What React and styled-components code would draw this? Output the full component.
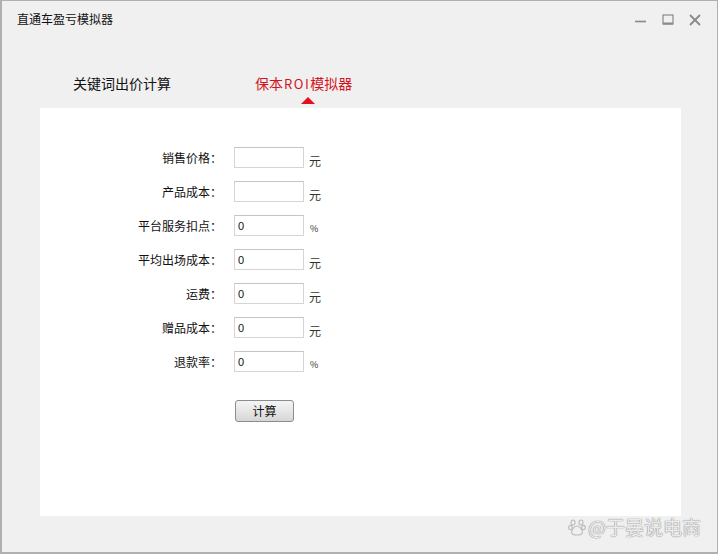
import styled, { createGlobalStyle } from 'styled-components';

const GlobalStyle = createGlobalStyle`
  html, body {
    margin: 0;
    padding: 0;
    background: #f0f0f0;
  }
  body {
    font-family: "Noto Sans CJK SC", "Liberation Sans", sans-serif;
  }
`;

const fields = [
  { label: '销售价格：', value: '', unit: '元' },
  { label: '产品成本：', value: '', unit: '元' },
  { label: '平台服务扣点：', value: '0', unit: '%' },
  { label: '平均出场成本：', value: '0', unit: '元' },
  { label: '运费：', value: '0', unit: '元' },
  { label: '赠品成本：', value: '0', unit: '元' },
  { label: '退款率：', value: '0', unit: '%' },
];

const App = () => {
  return (
    <Window>
      <GlobalStyle />
      <TitleBar>
        <Title>直通车盈亏模拟器</Title>
        <Controls>
          <svg width='14' height='14' viewBox='0 0 14 14'>
            <path d='M1 8.5h11' stroke='#8a8a8a' strokeWidth='1.6' />
          </svg>
          <svg width='14' height='14' viewBox='0 0 14 14'>
            <rect x='2' y='2' width='10' height='9' fill='none' stroke='#8a8a8a' strokeWidth='1.2' />
            <path d='M2 10.5h10' stroke='#8a8a8a' strokeWidth='2' />
          </svg>
          <svg width='14' height='14' viewBox='0 0 14 14'>
            <path d='M2 2l10 10M12 2L2 12' stroke='#8a8a8a' strokeWidth='1.8' />
          </svg>
        </Controls>
      </TitleBar>
      <Tabs>
        <Tab>关键词出价计算</Tab>
        <Tab active>
          保本<Latin>ROI</Latin>模拟器
        </Tab>
      </Tabs>
      <Panel>
        <Form>
          {fields.map((f) => (
            <Row key={f.label}>
              <Label>{f.label}</Label>
              <Input defaultValue={f.value} />
              <Unit small={f.unit === '%'}>{f.unit}</Unit>
            </Row>
          ))}
          <ButtonRow>
            <CalcButton>计算</CalcButton>
          </ButtonRow>
        </Form>
      </Panel>
      <Watermark>
        <svg width='18' height='18' viewBox='0 0 18 18'>
          <g fill='none' stroke='#bdbdbd' strokeWidth='1.2'>
            <ellipse cx='5' cy='4.5' rx='2' ry='2.5' />
            <ellipse cx='13' cy='4.5' rx='2' ry='2.5' />
            <ellipse cx='2.5' cy='9.5' rx='1.8' ry='2.2' />
            <ellipse cx='15.5' cy='9.5' rx='1.8' ry='2.2' />
            <path d='M9 8c-3 0-5.5 4-5.5 6.5 0 2 2 2.5 5.5 2.5s5.5-.5 5.5-2.5C14.5 12 12 8 9 8z' />
          </g>
        </svg>
        <span>@于晏说电商</span>
      </Watermark>
    </Window>
  );
};

export default App;

const Window = styled.div`
  position: relative;
  box-sizing: border-box;
  width: 718px;
  height: 554px;
  background: #f0f0f0;
  border: 1px solid #b0b0b0;
  border-left-width: 2px;
  border-bottom-width: 2px;
  display: flex;
  flex-direction: column;
  overflow: hidden;
`;

const TitleBar = styled.div`
  display: flex;
  justify-content: space-between;
  align-items: center;
  height: 35px;
  padding: 0 15px 0 15px;
`;

const Title = styled.div`
  font-size: 12px;
  color: #111;
`;

const Controls = styled.div`
  display: flex;
  align-items: center;
  gap: 13px;
  margin-top: 2px;
`;

const Tabs = styled.div`
  display: flex;
  height: 72px;
  padding-left: 71px;
  gap: 84px;
`;

const Tab = styled.div`
  position: relative;
  font-size: 14px;
  padding-top: 37px;
  color: ${({ active }) => (active ? '#d4121c' : '#111')};

  &::after {
    content: '';
    display: ${({ active }) => (active ? 'block' : 'none')};
    position: absolute;
    left: 46px;
    bottom: 4px;
    width: 0;
    height: 0;
    border-left: 7px solid transparent;
    border-right: 7px solid transparent;
    border-bottom: 7px solid #e2101c;
  }
`;

const Latin = styled.span`
  font-size: 13px;
  letter-spacing: 1.5px;
  margin-left: 1px;
`;

const Panel = styled.div`
  margin-left: 38px;
  width: 641px;
  height: 408px;
  background: #fff;
  box-sizing: border-box;
  padding: 39px 0 0 72px;
`;

const Form = styled.div`
  display: flex;
  flex-direction: column;
  gap: 13px;
`;

const Row = styled.div`
  display: flex;
  align-items: center;
  height: 21px;
`;

const Label = styled.div`
  width: 110px;
  text-align: right;
  font-size: 12px;
  color: #111;
  margin-right: 12px;
`;

const Input = styled.input`
  box-sizing: border-box;
  width: 70px;
  height: 21px;
  border: 1px solid #d5d5d5;
  border-top-color: #c4c4c4;
  padding: 0 3px;
  font-size: 11px;
  font-family: "Liberation Sans", sans-serif;
  color: #111;
  outline: none;
`;

const Unit = styled.span`
  margin-left: ${({ small }) => (small ? '6px' : '5px')};
  font-size: ${({ small }) => (small ? '9px' : '12px')};
  color: #333;
  align-self: flex-end;
  margin-bottom: ${({ small }) => (small ? '1px' : '-1px')};
`;

const ButtonRow = styled.div`
  margin-top: 12px;
  padding-left: 123px;
`;

const CalcButton = styled.button`
  width: 59px;
  height: 22px;
  border: 1px solid #8c8c8c;
  border-radius: 3px;
  background: linear-gradient(#f4f4f4, #e6e6e6 50%, #d6d6d6);
  font-size: 12px;
  font-family: "Noto Sans CJK SC", sans-serif;
  color: #111;
  padding: 0;
`;

const Watermark = styled.div`
  position: absolute;
  right: 16px;
  bottom: 12px;
  display: flex;
  align-items: center;
  gap: 2px;
  font-size: 19px;
  color: #ececec;
  text-shadow: 0 0 1px #8a8a8a, 0 0 1px #8a8a8a;
`;
